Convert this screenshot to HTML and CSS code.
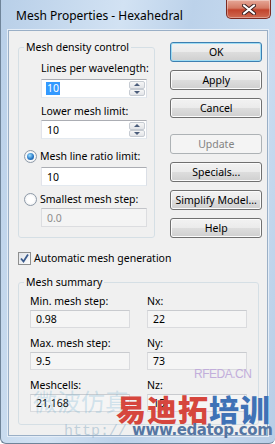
FILE: index.html
```html
<!DOCTYPE html>
<html lang="en">
<head>
    <meta charset="UTF-8">
    <meta name="viewport" content="width=device-width, initial-scale=1.0">
    <title>Mesh Properties - Hexahedral</title>
    <link rel="stylesheet" href="styles.css">
</head>
<body>
    <div class="window">
        <div class="titlebar">
            <span class="title">Mesh Properties - Hexahedral</span>
            <span class="close">
                <svg width="14" height="11" viewBox="0 0 14 11">
                    <path d="M2 1.5 L12 9.5 M12 1.5 L2 9.5" stroke="#3b2020" stroke-width="4" stroke-linecap="round"/>
                    <path d="M2 1.5 L12 9.5 M12 1.5 L2 9.5" stroke="#fff" stroke-width="2.2" stroke-linecap="round"/>
                </svg>
            </span>
        </div>

        <div class="client">
            <div class="top">
                <fieldset class="group density">
                    <legend>Mesh density control</legend>
                    <div class="label">Lines per wavelength:</div>
                    <div class="edit spin"><span class="sel">10</span><span class="updown"><i class="up"></i><i class="down"></i></span></div>
                    <div class="label second">Lower mesh limit:</div>
                    <div class="edit spin"><span>10</span><span class="updown"><i class="up"></i><i class="down"></i></span></div>
                    <div class="radio first"><span class="dot on"></span>Mesh line ratio limit:</div>
                    <div class="edit">10</div>
                    <div class="radio"><span class="dot"></span>Smallest mesh step:</div>
                    <div class="edit disabled">0.0</div>
                </fieldset>

                <div class="buttons">
                    <div class="btn default">OK</div>
                    <div class="btn">Apply</div>
                    <div class="btn">Cancel</div>
                    <div class="btn off">Update</div>
                    <div class="btn">Specials...</div>
                    <div class="btn">Simplify Model...</div>
                    <div class="btn">Help</div>
                </div>
            </div>

            <div class="check">
                <span class="box">
                    <svg width="11" height="11" viewBox="0 0 11 11">
                        <path d="M2 5.5 L4.5 8.5 L9 1.5" fill="none" stroke="#3a5a8c" stroke-width="1.8"/>
                    </svg>
                </span>
                Automatic mesh generation
            </div>

            <fieldset class="group summary">
                <legend>Mesh summary</legend>
                <div class="grid">
                    <div class="cell">
                        <div class="label">Min. mesh step:</div>
                        <div class="edit ro">0.98</div>
                    </div>
                    <div class="cell">
                        <div class="label">Nx:</div>
                        <div class="edit ro">22</div>
                    </div>
                    <div class="cell">
                        <div class="label">Max. mesh step:</div>
                        <div class="edit ro">9.5</div>
                    </div>
                    <div class="cell">
                        <div class="label">Ny:</div>
                        <div class="edit ro">73</div>
                    </div>
                    <div class="cell">
                        <div class="label">Meshcells:</div>
                        <div class="edit ro">21,168</div>
                    </div>
                    <div class="cell">
                        <div class="label">Nz:</div>
                        <div class="edit ro">15</div>
                    </div>
                </div>
            </fieldset>
        </div>

        <!-- watermark stamped over the screenshot -->
        <div class="mark">
            <span class="mark-faint">微波仿真</span>
            <span class="mark-rf">RFEDA.CN</span>
            <span class="mark-big"><b class="red">易迪拓</b><b class="blue">培训</b></span>
            <span class="mark-http">http://</span>
            <span class="mark-url">www.edatop.com</span>
        </div>
    </div>
</body>
</html>
```

FILE: styles.css
```css
body {
    margin: 0;
    padding: 0;
    background: #fff;
    font-family: "Noto Sans", "Liberation Sans", sans-serif;
    font-size: 10.5px;
    color: #000;
}
.window {
    position: relative;
    width: 275px;
    height: 444px;
    box-sizing: border-box;
    padding: 0 7px 7px 7px;
    background: linear-gradient(100deg, #b8cfe8 0%, #d2e2f3 35%, #bcd2ea 55%, #c9dcf0 80%, #b7cde6 100%);
    border-left: 1px solid #6f8499;
    border-bottom: 1px solid #6f8499;
    border-radius: 0 0 6px 6px;
    overflow: hidden;
}
.titlebar {
    display: flex;
    height: 30px;
    margin-left: -1px;
}
.title {
    align-self: center;
    padding-left: 9px;
    font-size: 12px;
    color: #000;
}
.close {
    display: flex;
    align-items: center;
    justify-content: center;
    margin-left: auto;
    margin-right: -3px;
    width: 43px;
    height: 18px;
    border: 1px solid #7b2b22;
    border-top: none;
    border-radius: 0 0 5px 5px;
    background: linear-gradient(#e6a898 0%, #d47a64 45%, #c2432c 55%, #cf6b52 100%);
    box-shadow: inset 0 0 0 1px rgba(255,255,255,0.35);
}
.client {
    height: 406px;
    box-sizing: border-box;
    padding: 9px 5px 0 9px;
    background: #f0f0f0;
    border: 1px solid #9aafc6;
    box-shadow: 0 0 0 1px #e4edf7;
}
.top {
    display: flex;
    gap: 15px;
}
.group {
    margin: 0;
    border: 1px solid #d5dfe5;
    border-radius: 3px;
    min-width: 0;
}
.group legend {
    padding: 0 2px;
    line-height: 14px;
}
.density {
    width: 138px;
    box-sizing: border-box;
    padding: 7px 0 10px 22px;
}
.density legend {
    margin-left: -17px;
}
.label {
    line-height: 14px;
    margin-bottom: 4px;
    white-space: nowrap;
}
.label.second {
    margin-top: 6px;
    margin-bottom: 2px;
}
.edit {
    display: flex;
    align-items: center;
    width: 106px;
    height: 19px;
    box-sizing: border-box;
    padding-left: 5px;
    background: #fff;
    border: 1px solid;
    border-color: #abadb3 #dbdfe6 #e3e9ef #e2e3ea;
}
.edit.disabled {
    background: #f4f4f4;
    border-color: #c2c4c9 #dcdde0 #dcdde0 #dcdde0;
    color: #8d8d8d;
}
.sel {
    background: #3399ff;
    color: #fff;
    padding: 0 1px;
    margin-left: -1px;
    line-height: 13px;
}
.updown {
    display: flex;
    flex-direction: column;
    margin-left: auto;
    margin-right: 1px;
    width: 16px;
    height: 15px;
}
.updown i {
    position: relative;
    flex: 1;
    border: 1px solid #c6cbd2;
    border-radius: 2px;
    background: linear-gradient(#f6f6f6, #e2e4e8);
}
.updown i::after {
    content: "";
    position: absolute;
    left: 4px;
    top: 1px;
    border-left: 3px solid transparent;
    border-right: 3px solid transparent;
}
.updown .up::after {
    border-bottom: 3px solid #4a5c7a;
}
.updown .down::after {
    border-top: 3px solid #4a5c7a;
}
.radio {
    display: flex;
    align-items: center;
    gap: 3px;
    margin-left: -17px;
    margin-top: 6px;
    margin-bottom: 2px;
    line-height: 14px;
    white-space: nowrap;
}
.radio.first {
    margin-top: 10px;
    margin-bottom: 4px;
}
.dot {
    width: 11px;
    height: 11px;
    border: 1px solid #8e9aa8;
    border-radius: 50%;
    background: radial-gradient(circle, #fff 40%, #e3e6ea 100%);
    box-sizing: content-box;
    position: relative;
}
.dot.on::after {
    content: "";
    position: absolute;
    left: 2px;
    top: 2px;
    width: 7px;
    height: 7px;
    border-radius: 50%;
    background: radial-gradient(circle at 40% 35%, #9fe0ff 0%, #2a7ac8 55%, #1b4f8a 100%);
}
.buttons {
    display: flex;
    flex-direction: column;
    gap: 8px;
    width: 92px;
    margin-top: 2px;
}
.btn {
    height: 20px;
    box-sizing: border-box;
    line-height: 18px;
    text-align: center;
    border: 1px solid #707070;
    border-radius: 3px;
    background: linear-gradient(#f2f2f2 0%, #ebebeb 48%, #dddddd 52%, #cfcfcf 100%);
    box-shadow: inset 0 0 0 1px #fbfbfb;
    white-space: nowrap;
}
.btn.default {
    border-color: #3c7fb1;
    box-shadow: inset 0 0 0 1px #9fdcf3;
}
.btn.off {
    margin-top: 8px;
    border-color: #adb2b5;
    background: #f4f4f4;
    box-shadow: none;
    color: #838383;
}
.check {
    display: flex;
    align-items: center;
    gap: 3px;
    margin-top: 13px;
    line-height: 14px;
}
.box {
    display: flex;
    align-items: center;
    justify-content: center;
    width: 11px;
    height: 11px;
    border: 1px solid #8e8f8f;
    background: linear-gradient(135deg, #e0e3e8, #fdfdfd);
}
.summary {
    width: 241px;
    box-sizing: border-box;
    margin-top: 10px;
    padding: 5px 0 12px 11px;
}
.summary legend {
    margin-left: -6px;
}
.grid {
    display: grid;
    grid-template-columns: 100px 100px;
    column-gap: 17px;
    row-gap: 8px;
}
.cell .label {
    margin-bottom: 2px;
}
.edit.ro {
    width: 100px;
    height: 18px;
    background: #f5f5f5;
    border-color: #c9cbcf #dadbde #dadbde #dadbde;
}
.mark {
    position: absolute;
    left: 0;
    top: 0;
    width: 275px;
    height: 444px;
    pointer-events: none;
}
.mark span {
    position: absolute;
    white-space: nowrap;
}
.mark-faint {
    left: 32px;
    top: 386px;
    font-family: "Noto Sans CJK SC", sans-serif;
    font-size: 24px;
    line-height: 30px;
    color: rgba(120, 180, 210, 0.3);
}
.mark-rf {
    left: 193px;
    top: 367px;
    font-family: "Liberation Sans", sans-serif;
    font-size: 12px;
    letter-spacing: -0.5px;
    color: #c2aedb;
}
.mark-big {
    left: 115px;
    top: 390px;
    font-family: "Noto Sans CJK SC", sans-serif;
    font-size: 30px;
    line-height: 36px;
    letter-spacing: 1px;
}
.mark-big b {
    font-weight: 900;
}
.red {
    color: #d6463d;
}
.blue {
    color: #3f72b6;
}
.mark-http {
    left: 63px;
    top: 423px;
    font-family: "Liberation Mono", monospace;
    font-size: 15px;
    color: rgba(150, 180, 200, 0.55);
}
.mark-url {
    left: 131px;
    top: 421px;
    font-family: "DejaVu Sans", sans-serif;
    font-weight: bold;
    font-size: 15px;
    letter-spacing: -0.4px;
    color: #5576a3;
}
```
